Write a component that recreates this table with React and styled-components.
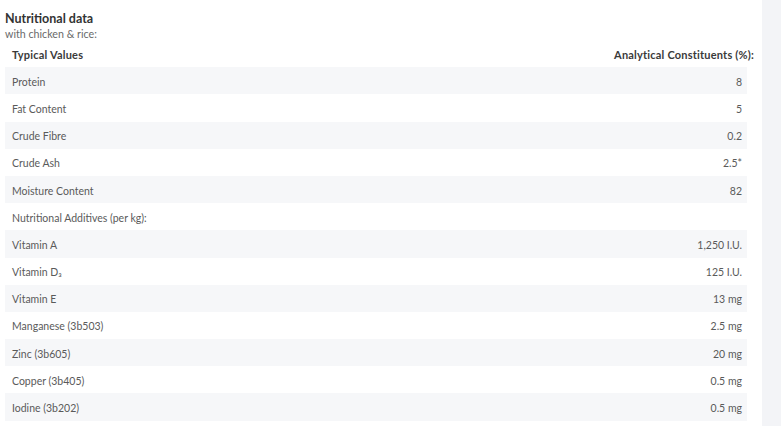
import React from "react";
import styled, { createGlobalStyle } from "styled-components";

const Global = createGlobalStyle`
  html, body { margin: 0; padding: 0; background: #fff; }
  body { font-family: Lato, "Open Sans", "Liberation Sans", sans-serif; color: #444; }
  * { box-sizing: border-box; }
`;

const Page = styled.div`
  display: flex;
  width: 781px;
  height: 426px;
  overflow: hidden;
`;

const Main = styled.div`
  flex: 0 0 747px;
  padding: 10px 0 0 5px;
`;

const Side = styled.div`
  flex: 1;
  margin-left: 15px;
  background: #f3f4f7;
`;

const Title = styled.h2`
  margin: 0;
  font-size: 12.5px;
  line-height: 17px;
  font-weight: 700;
  color: #333;
`;

const Subtitle = styled.div`
  font-size: 10.7px;
  line-height: 13px;
  color: #6a6a6a;
`;

const Table = styled.div`
  display: flex;
  flex-direction: column;
`;

const Row = styled.div`
  display: flex;
  justify-content: space-between;
  align-items: center;
  height: 27.2px;
  padding: 2px 5px 0 7px;
  font-size: 10.5px;
  color: #5a5a5a;
  background: ${(p) => (p.$shaded ? "#f6f7f9" : "transparent")};
`;

const HeadRow = styled(Row)`
  font-size: 11px;
  font-weight: 700;
  letter-spacing: 0.2px;
  color: #3a3a3a;
  padding-right: 0;
  margin-right: -7px;
`;

const data = [
  ["Protein", "8"],
  ["Fat Content", "5"],
  ["Crude Fibre", "0.2"],
  ["Crude Ash", "2.5*"],
  ["Moisture Content", "82"],
  ["Nutritional Additives (per kg):", ""],
  ["Vitamin A", "1,250 I.U."],
  ["Vitamin D₃", "125 I.U."],
  ["Vitamin E", "13 mg"],
  ["Manganese (3b503)", "2.5 mg"],
  ["Zinc (3b605)", "20 mg"],
  ["Copper (3b405)", "0.5 mg"],
  ["Iodine (3b202)", "0.5 mg"],
];

export default function App() {
  return (
    <>
      <Global />
      <Page>
        <Main>
          <Title>Nutritional data</Title>
          <Subtitle>with chicken &amp; rice:</Subtitle>
          <Table>
            <HeadRow>
              <span>Typical Values</span>
              <span>Analytical Constituents (%):</span>
            </HeadRow>
            {data.map(([k, v], i) => (
              <Row key={k} $shaded={i % 2 === 0}>
                <span>{k}</span>
                <span>{v}</span>
              </Row>
            ))}
          </Table>
        </Main>
        <Side />
      </Page>
    </>
  );
}
